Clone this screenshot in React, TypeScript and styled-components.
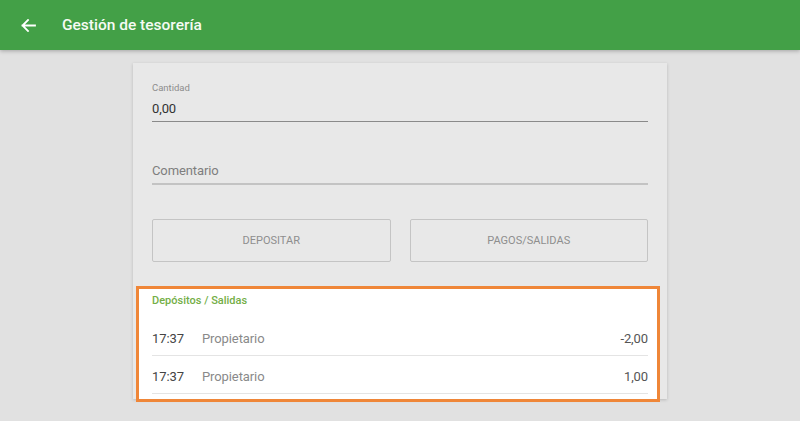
import React from "react";
import styled, { createGlobalStyle } from "styled-components";

const GlobalStyle = createGlobalStyle`
  html, body {
    margin: 0;
    padding: 0;
    background: #e1e1e1;
    font-family: Roboto, "Noto Sans", Arial, sans-serif;
  }
  * { box-sizing: border-box; }
`;

const Page = styled.div`
  width: 800px;
  height: 421px;
  overflow: hidden;
  background: #e1e1e1;
`;

const AppBar = styled.header`
  position: relative;
  z-index: 2;
  height: 50px;
  display: flex;
  align-items: center;
  padding-left: 21px;
  background: #43a047;
  box-shadow: 0 1px 4px rgba(0, 0, 0, 0.28);
`;

const BackIcon = styled.svg`
  width: 15px;
  height: 13px;
  flex: none;
  margin-right: 26px;
`;

const Title = styled.h1`
  margin: 0;
  font-size: 15.5px;
  font-weight: 500;
  color: #f6fbf4;
  line-height: 20px;
`;

const Main = styled.main`
  padding-top: 13px;
`;

const Card = styled.section`
  width: 534px;
  margin: 0 auto;
  background: #e8e8e8;
  box-shadow: 0 1px 3px rgba(0, 0, 0, 0.18);
`;

const Form = styled.div`
  padding: 19px 19px 0;
`;

const Field = styled.div<{ $top: number }>`
  margin-top: ${(p) => p.$top}px;
  display: flex;
  flex-direction: column;
`;

const FieldLabel = styled.label`
  font-size: 9.5px;
  line-height: 11px;
  color: #8d8d8d;
  margin-bottom: 7px;
`;

const FieldInput = styled.div<{ $placeholder?: boolean }>`
  font-size: 13px;
  letter-spacing: -0.1px;
  line-height: 18px;
  padding-bottom: 3px;
  color: ${(p) => (p.$placeholder ? "#7e7e7e" : "#333")};
  border-bottom: ${(p) => (p.$placeholder ? "2px solid #c3c3c3" : "1px solid #8a8a8a")};
`;

const Buttons = styled.div`
  margin-top: 34px;
  display: grid;
  grid-template-columns: 1fr 1fr;
  gap: 19px;
`;

const OutlineButton = styled.button`
  height: 43px;
  border: 1px solid #c4c4c4;
  border-radius: 2px;
  background: transparent;
  font-family: Roboto, Arial, sans-serif;
  font-size: 11px;
  color: #8e8e8e;
  text-transform: uppercase;
  padding: 0;
`;

const List = styled.div`
  margin: 27px 10px 0 6px;
  background: #ffffff;
  outline: 3px solid #ef8638;
  padding: 5px 9px 5px 13px;
`;

const ListTitle = styled.div`
  font-size: 11px;
  font-weight: 500;
  line-height: 13px;
  color: #74ae46;
  margin-bottom: 11px;
`;

const Row = styled.div`
  height: 38px;
  padding-top: 4px;
  display: flex;
  align-items: center;
  border-bottom: 1px solid #e4e4e4;
  font-size: 13px;
  letter-spacing: -0.1px;
`;

const Time = styled.span`
  width: 50px;
  color: #444;
`;

const Who = styled.span`
  flex: 1;
  color: #8a8a8a;
`;

const Amount = styled.span`
  color: #555;
`;

const rows = [
  { time: "17:37", who: "Propietario", amount: "-2,00" },
  { time: "17:37", who: "Propietario", amount: "1,00" },
];

export default function App() {
  return (
    <Page>
      <GlobalStyle />
      <AppBar>
        <BackIcon viewBox="0 0 15 13" fill="none">
          <path
            d="M14 6.5H1.5M7 1L1.5 6.5L7 12"
            stroke="#ffffff"
            strokeWidth="1.8"
            strokeLinecap="square"
          />
        </BackIcon>
        <Title>Gestión de tesorería</Title>
      </AppBar>
      <Main>
        <Card>
          <Form>
            <Field $top={0}>
              <FieldLabel>Cantidad</FieldLabel>
              <FieldInput>0,00</FieldInput>
            </Field>
            <Field $top={40}>
              <FieldInput $placeholder>Comentario</FieldInput>
            </Field>
            <Buttons>
              <OutlineButton>Depositar</OutlineButton>
              <OutlineButton>Pagos/Salidas</OutlineButton>
            </Buttons>
          </Form>
          <List>
            <ListTitle>Depósitos / Salidas</ListTitle>
            {rows.map((r, i) => (
              <Row key={i}>
                <Time>{r.time}</Time>
                <Who>{r.who}</Who>
                <Amount>{r.amount}</Amount>
              </Row>
            ))}
          </List>
        </Card>
      </Main>
    </Page>
  );
}
